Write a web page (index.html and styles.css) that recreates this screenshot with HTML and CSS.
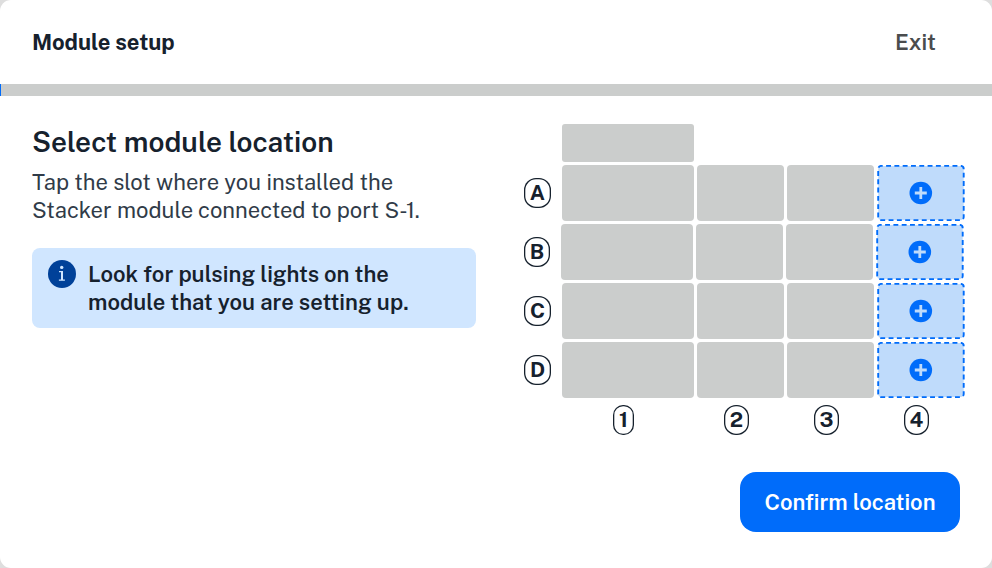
FILE: index.html
```html
<!DOCTYPE html>
<html lang="en">
<head>
<meta charset="utf-8">
<title>Module setup</title>
<link rel="stylesheet" href="styles.css">
</head>
<body>
<svg class="defs" aria-hidden="true">
  <symbol id="open-slot" viewBox="0 0 88 56">
    <rect x="1.2" y="0.9" width="85.5" height="54.2" rx="3" fill="#bfdbfb" stroke="#006cfa" stroke-width="1.9" stroke-dasharray="4.9 3.4" stroke-dashoffset="-4.9"/>
    <circle cx="43.8" cy="28" r="11.3" fill="#006cfa"/>
    <path d="M43.8 22v12M37.8 28h12" stroke="#bfdbfb" stroke-width="2.8"/>
  </symbol>
</svg>
<div class="modal">
  <header class="header">
    <h1 class="title">Module setup</h1>
    <span class="exit">Exit</span>
  </header>
  <div class="progress"><div class="progress-fill"></div></div>
  <main class="content">
    <section class="copy">
      <h2 class="heading">Select module location</h2>
      <p class="body">Tap the slot where you installed the<br>Stacker module connected to port S-1.</p>
      <div class="notice">
        <svg class="info" viewBox="0 0 28 28"><circle cx="14" cy="14" r="14" fill="#004199"/><circle cx="13.7" cy="7.4" r="1.7" fill="#d0e6ff"/><path d="M11 11.6h4M10.9 20.1h6" fill="none" stroke="#d0e6ff" stroke-width="1.1"/><path d="M14 11.1v9" stroke="#d0e6ff" stroke-width="2"/></svg>
        <p class="notice-text">Look for pulsing lights on the<br>module that you are setting up.</p>
      </div>
    </section>
    <section class="deck">
      <div class="slot top"></div>
      <div class="row"><span class="label">A</span><div class="slot wide"></div><div class="slot"></div><div class="slot"></div><svg class="open"><use href="#open-slot"/></svg></div>
      <div class="row"><span class="label label-b">B</span><div class="slot wide"></div><div class="slot"></div><div class="slot"></div><svg class="open"><use href="#open-slot"/></svg></div>
      <div class="row"><span class="label">C</span><div class="slot wide"></div><div class="slot"></div><div class="slot"></div><svg class="open"><use href="#open-slot"/></svg></div>
      <div class="row"><span class="label">D</span><div class="slot wide"></div><div class="slot"></div><div class="slot"></div><svg class="open"><use href="#open-slot"/></svg></div>
      <div class="columns"><div class="col col-wide"><span class="label one">1</span></div><div class="col"><span class="label two">2</span></div><div class="col"><span class="label three">3</span></div><div class="col"><span class="label three">4</span></div></div>
    </section>
  </main>
  <footer class="footer"><button class="confirm">Confirm location</button></footer>
</div>
</body>
</html>
```
FILE: styles.css
```css
* { box-sizing: border-box; }
body {
  margin: 0;
  background: #dedede;
  font-family: "Public Sans", Inter, "Liberation Sans", sans-serif;
  color: #16212d;
}
h1, h2, p { margin: 0; }
.defs { position: absolute; width: 0; height: 0; }
.modal {
  width: 992px;
  height: 568px;
  border-radius: 11px;
  background: #fff;
  overflow: hidden;
  display: flex;
  flex-direction: column;
}
.header {
  height: 84px;
  padding: 0 56px 0 32px;
  display: flex;
  align-items: center;
  justify-content: space-between;
}
.title { font-size: 22px; line-height: 28px; font-weight: 700; }
.exit { font-size: 22px; line-height: 28px; font-weight: 600; color: #4a4c4e; }
.progress { height: 12px; background: #cbcdcc; }
.progress-fill { width: 1px; height: 12px; background: #006cfa; }
.content { height: 376px; padding: 28px 0 0 32px; display: flex; }
.copy { width: 444px; margin-right: 48px; }
.heading { font-size: 28px; line-height: 36px; font-weight: 600; white-space: nowrap; }
.body {
  margin-top: 8px;
  font-size: 22px;
  line-height: 28px;
  color: #303b48;
  white-space: nowrap;
}
.notice {
  height: 80px;
  margin-top: 24px;
  padding: 12px 16px;
  display: flex;
  gap: 12px;
  border-radius: 8px;
  background: #d0e6ff;
}
.info { width: 28px; height: 28px; flex: none; }
.notice-text { font-size: 22px; line-height: 28px; font-weight: 600; white-space: nowrap; }
.deck { width: 441px; }
.slot { width: 87.3px; height: 56px; border-radius: 4px; background: #cbcdcc; flex: none; }
.top { width: 132.5px; height: 38px; margin: 0 0 3px 37.8px; border-radius: 3px; }
.wide { width: 132.4px; margin-left: 8px; }
.row { height: 56px; margin-bottom: 3px; display: flex; align-items: center; gap: 2.8px; }
.open { width: 88px; height: 56px; flex: none; }
.label {
  width: 27px;
  height: 30px;
  flex: none;
  display: flex;
  align-items: center;
  justify-content: center;
  box-shadow: inset 0 0 0 1.3px #16212d;
  border-radius: 12px;
  font-size: 21px;
  line-height: 22px;
  font-weight: 700;
}
.label-b { width: 26px; }
.columns { display: flex; padding: 4px 0 0 37.5px; }
.col { width: 90px; display: flex; justify-content: center; }
.col-wide { width: 124px; }
.one { width: 21px; border-radius: 10px; }
.two { width: 24.5px; margin-left: 12px; }
.three { width: 25.5px; margin-left: 12px; }
.footer { padding-right: 32px; display: flex; justify-content: flex-end; }
.confirm {
  width: 220px;
  height: 60px;
  padding: 0;
  border: 0;
  border-radius: 16px;
  background: #006cfa;
  color: #fff;
  font: 600 22px/28px "Public Sans", Inter, "Liberation Sans", sans-serif;
  white-space: nowrap;
}
```
